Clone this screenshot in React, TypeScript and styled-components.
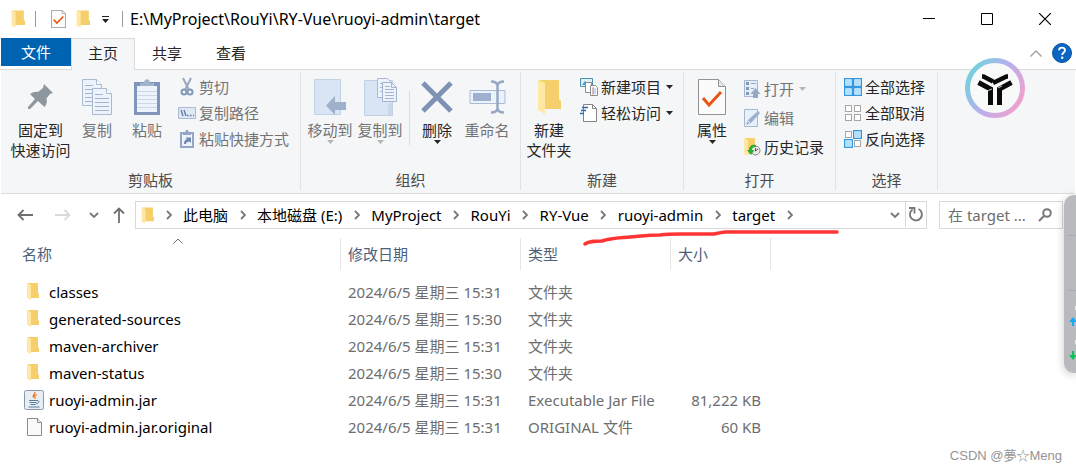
import React from "react";
import styled, { createGlobalStyle } from "styled-components";

const GlobalStyle = createGlobalStyle`
  * { box-sizing: border-box; }
  body {
    margin: 0;
    background: #fff;
    color: #000;
    font: 15px/20px "Noto Sans", "Noto Sans CJK SC", sans-serif;
  }
  button, input { font: inherit; color: inherit; }
  button { background: none; border: 0; padding: 0; margin: 0; cursor: pointer; }
  svg { display: block; flex: none; }
`;

const Window = styled.div`
  position: relative;
  min-height: 100vh;
  overflow: hidden;
`;

/* Title bar */
const TitleBar = styled.header`
  display: flex;
  align-items: center;
  height: 38px;
  padding: 0 2px 0 11px;
`;
const QuickAccess = styled.div`
  display: flex;
  align-items: center;
  gap: 10px;
`;
const Divider = styled.span<{ $after?: number }>`
  width: 1px;
  height: 16px;
  margin-right: ${(p) => p.$after ?? 0}px;
  background: #9a9a9a;
`;
const Title = styled.h1`
  flex: 1;
  margin: 0 0 0 7px;
  font-size: 16px;
  font-weight: 400;
  line-height: 20px;
`;
const WindowButton = styled.button`
  display: flex;
  justify-content: center;
  align-items: center;
  width: 58px;
  height: 38px;
`;

/* Tabs */
const TabBar = styled.nav`
  display: flex;
  align-items: flex-start;
  height: 32px;
  padding: 0 4px 0 1px;
  box-shadow: inset 0 -1px #dadbdc;
`;
const FileTab = styled.button`
  width: 70px;
  height: 28px;
  background: #0063b1;
  color: #fff;
`;
const Tab = styled.button<{ $active?: boolean }>`
  width: 64px;
  height: 32px;
  padding-bottom: 4px;
  color: #262626;
  border: 1px solid ${(p) => (p.$active ? "#dadbdc" : "transparent")};
  border-bottom: 0;
  background: ${(p) => (p.$active ? "#f5f6f7" : "none")};
`;
const TabTools = styled.div`
  display: flex;
  align-items: center;
  gap: 10px;
  height: 30px;
  margin-left: auto;
`;

/* Ribbon */
const Ribbon = styled.section`
  display: flex;
  height: 124px;
  margin: 0 1px;
  padding: 2px 0 3px;
  background: #f5f6f7;
  border-bottom: 1px solid #dadbdc;
`;
const Group = styled.div<{ $width: number; $inset: number }>`
  display: flex;
  flex-direction: column;
  justify-content: space-between;
  flex: none;
  width: ${(p) => p.$width}px;
  border-right: 1px solid #e2e3e4;
  & > div { padding: 2px 0 0 ${(p) => p.$inset}px; }
`;
const GroupBody = styled.div`
  display: flex;
  align-items: flex-start;
`;
const GroupLabel = styled.span`
  text-align: center;
  color: #4b4b4b;
`;
const GroupRule = styled.span`
  width: 1px;
  height: 54px;
  margin: 17px 2px 0 4px;
  background: #dcdddf;
`;
const LargeButton = styled.button<{ $wide?: boolean; $muted?: boolean }>`
  display: flex;
  flex-direction: column;
  align-items: center;
  width: ${(p) => (p.$wide ? 63 : 50)}px;
  white-space: nowrap;
  color: ${(p) => (p.$muted ? "#737475" : "#262626")};
`;
const LargeIcon = styled.span`
  display: flex;
  justify-content: center;
  align-items: center;
  height: 46px;
`;
const SmallColumn = styled.div<{ $row: number }>`
  display: flex;
  flex-direction: column;
  padding-left: 6px;
  button { height: ${(p) => p.$row}px; }
`;
const SmallButton = styled.button<{ $muted?: boolean }>`
  display: flex;
  align-items: center;
  gap: 3px;
  white-space: nowrap;
  color: ${(p) => (p.$muted ? "#737475" : "#262626")};
`;
const ArrowSlot = styled.span`
  padding-left: 2px;
`;

/* Navigation row */
const NavRow = styled.div`
  position: relative;
  display: flex;
  align-items: center;
  height: 42px;
  padding: 0 13px 0 6px;
`;
const NavButton = styled.button<{ $width: number }>`
  display: flex;
  justify-content: center;
  align-items: center;
  flex: none;
  width: ${(p) => p.$width}px;
  height: 28px;
`;
const AddressBar = styled.div`
  display: flex;
  align-items: center;
  flex: 1;
  min-width: 0;
  height: 28px;
  margin: 0 12px 0 2px;
  padding-left: 5px;
  border: 1px solid #d9d9d9;
`;
const Crumb = styled.button`
  white-space: nowrap;
`;
const CrumbArrow = styled.span`
  display: flex;
  justify-content: center;
  width: 29px;
`;
const AddressTools = styled.div`
  display: flex;
  margin-left: auto;
`;
const RefreshButton = styled(NavButton)`
  height: 26px;
  border-left: 1px solid #d9d9d9;
`;
const SearchBox = styled.label`
  display: flex;
  align-items: center;
  width: 124px;
  height: 28px;
  padding: 0 10px 0 8px;
  border: 1px solid #d9d9d9;
`;
const SearchInput = styled.input`
  flex: 1;
  min-width: 0;
  padding: 0;
  border: 0;
  outline: 0;
  background: none;
  &::placeholder { color: #6d6d6d; opacity: 1; }
`;
const Underline = styled.svg`
  position: absolute;
  left: 582px;
  top: 34px;
`;

/* File list */
const FileTable = styled.table`
  width: calc(100% - 15px);
  margin: 2px 0 0 15px;
  table-layout: fixed;
  border-collapse: separate;
  border-spacing: 0;
`;
const HeadCell = styled.th<{ $width?: number }>`
  position: relative;
  width: ${(p) => (p.$width ? p.$width + "px" : "auto")};
  height: 32px;
  padding: 0 7px;
  text-align: left;
  font-weight: 400;
  color: #4c607a;
  border-right: ${(p) => (p.$width ? "1px solid #e5e5e5" : "0")};
`;
const SortMark = styled.span`
  position: absolute;
  left: 50%;
  top: 0;
  margin-left: -5px;
`;
const HeadGap = styled.tr`
  height: 8px;
`;
const Cell = styled.td<{ $right?: boolean }>`
  height: 27px;
  padding: 0 10px 0 7px;
  white-space: nowrap;
  text-align: ${(p) => (p.$right ? "right" : "left")};
  color: #6d6d6d;
`;
const NameCell = styled(Cell)`
  padding-left: 9px;
  color: #000;
`;
const FileName = styled.span`
  display: flex;
  align-items: center;
  gap: 5px;
`;

/* Floating items */
const Badge = styled.svg`
  position: absolute;
  top: 58px;
  right: 51px;
`;
const SidePanel = styled.aside`
  position: absolute;
  top: 195px;
  right: 0;
  width: 12px;
  height: 178px;
  border-radius: 10px 0 0 10px;
  background: #b9babe;
  box-shadow: 0 2px 10px rgba(0, 0, 0, 0.22);
`;
const Watermark = styled.span`
  position: absolute;
  top: 446px;
  right: 14px;
  font: 13px/20px "Liberation Sans", "Noto Sans CJK SC", sans-serif;
  color: #949494;
`;

const Folder = ({ w = 14, h = 18 }: { w?: number; h?: number }) => (
  <svg width={w} height={h} viewBox="0 0 24 36" preserveAspectRatio="none">
    <path d="M2 1h20v19l2 2v8H6z" fill="#f5cf6b" />
    <path d="M1 1l7 3v31L1 31z" fill="#ffe8a3" />
  </svg>
);
const Caret = ({ color = "#262626" }: { color?: string }) => (
  <svg width="7" height="4" viewBox="0 0 7 4"><path d="M0 0h7L3.5 4z" fill={color} /></svg>
);
const CheckDoc = ({ w, h }: { w: number; h: number }) => (
  <svg width={w} height={h} viewBox="0 0 28 36" preserveAspectRatio="none">
    <path d="M.5.5h20l7 7v28H.5z" fill="#fbfbfb" stroke="#929292" vectorEffect="non-scaling-stroke" />
    <path d="M20.5.5v7h7" fill="#e6e6e6" stroke="#929292" />
    <path d="M5 19l6 7 12-13" fill="none" stroke="#ea5514" strokeWidth="3" />
  </svg>
);
const Chevron = () => (
  <svg width="6" height="10" viewBox="0 0 6 10"><path d="M1 1l4 4-4 4" fill="none" stroke="#787878" strokeWidth="1.8" /></svg>
);
const ChevronDown = ({ w = 10 }: { w?: number }) => (
  <svg width={w} height="7" viewBox="0 0 10 7"><path d="M1 1l4 4 4-4" fill="none" stroke="#787878" strokeWidth="1.8" /></svg>
);
const PageLines = ({ x, y }: { x: number; y: number }) => (
  <g transform={`translate(${x} ${y})`}>
    <path d="M.5.5h14l5 5v21H.5z" fill="#edf3fb" stroke="#a9bad1" />
    <path d="M14.5.5v5h5" fill="#fff" stroke="#a9bad1" />
    <path d="M3 6.5h8M3 10.5h14M3 14.5h14M3 18.5h14M3 22.5h14" stroke="#a3b5d0" />
  </g>
);
const CopyIcon = () => (
  <svg width="31" height="37" viewBox="0 0 31 37"><PageLines x={0} y={0} /><PageLines x={10} y={9} /></svg>
);
const PinIcon = () => (
  <svg width="28" height="28" viewBox="0 0 28 28">
    <path d="M17 1l9 9-3 1-3.5 4.500c1 3 0 6-2 8.500L11 18 3 26l-2 0 0-2 7-8-5-5c3-2 6-2.500 8-2L16 5z" fill="#8d979d" />
  </svg>
);
const PasteIcon = () => (
  <svg width="28" height="38" viewBox="0 0 28 38">
    <path d="M1 4h26v33H1z" fill="#8195b8" />
    <path d="M4 8h20v26H4z" fill="#edf3fb" />
    <path d="M4 13.5h20M4 17.5h20M4 21.5h20M4 25.5h20M4 29.5h20" stroke="#cbd8ea" />
    <path d="M7 8V5h4c0-5 6-5 6 0h4v3z" fill="#a3b3cc" />
  </svg>
);
const CutIcon = () => (
  <svg width="18" height="20" viewBox="0 0 18 20">
    <path d="M5 1l6 12M13 1L7 13" stroke="#98a8c2" strokeWidth="2" />
    <circle cx="6" cy="15" r="2.5" fill="none" stroke="#8297ba" strokeWidth="2" />
    <circle cx="12" cy="15" r="2.5" fill="none" stroke="#8297ba" strokeWidth="2" />
  </svg>
);
const PathIcon = () => (
  <svg width="18" height="12" viewBox="0 0 18 12">
    <path d="M.5.5h17v11H.5z" fill="#dfe9f6" stroke="#a9bad1" />
    <path d="M3 3l2 6M6 3l2 6M9 8.5h1.500M12 8.5h1.500M15 8.5h1" stroke="#60779f" strokeWidth="1.3" />
  </svg>
);
const ShortcutIcon = () => (
  <svg width="18" height="20" viewBox="0 0 18 20">
    <path d="M3 4h12v14H3z" fill="#eef4fc" stroke="#94a6c4" strokeWidth="2" />
    <path d="M5 6V3h2.500c0-3 3-3 3 0H13v3z" fill="#94a6c4" />
    <path d="M6 15c0-3 1-4 3-5L7.5 8.5H13V14l-1.500-1.500C9 13 8 14 8 15z" fill="#7189b0" />
  </svg>
);
const MoveIcon = () => (
  <svg width="36" height="38" viewBox="0 0 36 38">
    <path d="M2.5 1.5h26v35h-26z" fill="#d9e5f4" stroke="#c0d0e5" />
    <path d="M14 27.5L23 18v6h11v8H23v5z" fill="#9fb0ca" />
  </svg>
);
const CopyToIcon = () => (
  <svg width="36" height="40" viewBox="0 0 36 40">
    <path d="M2.5 3.5h28v35h-28z" fill="#d9e5f4" stroke="#c0d0e5" />
    <path d="M26 38V28c1-3 4-3 4 0v10z" fill="#cad8ea" />
    <path d="M15.5 1.5h10l4 4v15h-14z" fill="#edf3fb" stroke="#a9bad1" />
    <path d="M18 6.5h6M18 10.5h4M18 14.5h4" stroke="#a3b5d0" />
    <path d="M20.5 5.5h9l5 5v14h-14z" fill="#edf3fb" stroke="#a0b3cf" />
    <path d="M29.5 5.5v5h5M23 9.5h5M23 12.5h9M23 15.5h9M23 18.5h9M23 21.5h9" fill="none" stroke="#a3b5d0" />
  </svg>
);
const DeleteIcon = () => (
  <svg width="32" height="32" viewBox="0 0 32 32"><path d="M2 2l28 28M30 2L2 30" stroke="#8092b3" strokeWidth="5" /></svg>
);
const RenameIcon = () => (
  <svg width="37" height="34" viewBox="0 0 37 34">
    <path d="M1 10.5h35v13H1z" fill="#eaf2fb" stroke="#a9bbd6" />
    <path d="M4 13h18v8H4z" fill="#9eb0cd" />
    <path d="M22 1.5c4 0 6 1 6.5 4 .5-3 2.5-4 6.5-4M28.5 4v26M22 32.5c4 0 6-1 6.5-4 .5 3 2.5 4 6.5 4" fill="none" stroke="#96a8c5" strokeWidth="2.5" />
  </svg>
);
const NewItemIcon = () => (
  <svg width="18" height="18" viewBox="0 0 18 18">
    <path d="M.5.5h12v8H.5z" fill="#dff0f7" stroke="#4d91ac" />
    <path d="M2 7l3-4 3 3 2-2 2 3z" fill="#4a9bc0" />
    <path d="M5.5 4.5h6v10h-6z" fill="#fff" stroke="#8c8c8c" />
    <path d="M10.5 7.5h5l2 2v8h-7z" fill="#fff" stroke="#8c8c8c" />
    <path d="M12 11h4M12 13h4M12 15h4" stroke="#8bb2d5" /><path d="M13 9v8" stroke="#e39898" />
  </svg>
);
const EasyIcon = () => (
  <svg width="18" height="18" viewBox="0 0 18 18">
    <path d="M3.5.5h9l4 4v13h-13z" fill="#fff" stroke="#858585" />
    <path d="M12.5.5v4h4" fill="none" stroke="#858585" />
    <path d="M2 3.5h6M1 6.5h5M0 9.5h4" stroke="#2c6ba3" strokeWidth="1.5" />
  </svg>
);
const OpenIcon = () => (
  <svg width="18" height="18" viewBox="0 0 18 18">
    <path d="M1.5.5h13v16h-13z" fill="#e5edf8" stroke="#a5b5cd" />
    <path d="M3 2h3v3H3zM3 7h3v3H3zM3 12h3v3H3z" fill="#8297b9" />
    <path d="M8 3.5h5M8 8.5h3M8 13.5h2" stroke="#94a8c7" />
    <path d="M12.5 8l5 6H15v4h-5v-4H7.500z" fill="#96a7c3" />
  </svg>
);
const EditIcon = () => (
  <svg width="18" height="18" viewBox="0 0 18 18">
    <path d="M1.5.5h13v17h-13z" fill="#e8f0fa" stroke="#a5b7d1" />
    <path d="M3 16l2-5 10-9 2 2L8 14z" fill="#9bb0cf" />
    <path d="M5 12l2 2" stroke="#fff" />
  </svg>
);
const HistoryIcon = () => (
  <svg width="18" height="20" viewBox="0 0 18 20">
    <path d="M2 1h10v16H4z" fill="#f5cf6b" /><path d="M1 1l4 2v16l-4-2z" fill="#ffe8a3" />
    <circle cx="12.5" cy="13.5" r="4.5" fill="#e9e9e9" stroke="#888" />
    <path d="M12.5 14v-3M12.500 14l2.500-2" fill="none" stroke="#555" />
    <path d="M13 8c-4-1-7 1-7 5H4l4 5 3.500-5H9c0-2 1-3 4-3z" fill="#2fae33" />
  </svg>
);
const SelectIcon = ({ on }: { on: number[] }) => (
  <svg width="18" height="18" viewBox="0 0 18 18">
    {[0, 1, 2, 3].map((i) => {
      const x = (i % 2) * 9;
      const y = Math.floor(i / 2) * 9;
      return on.includes(i) ? (
        <g key={i}>
          <rect x={x} y={y} width="9" height="9" fill="#3298e2" />
          <rect x={x + 1.3} y={y + 1.3} width="6.4" height="6.4" fill="#eaf7ff" />
          <rect x={x + 2} y={y + 2} width="5" height="5" fill="#b5e0fb" />
        </g>
      ) : (
        <rect key={i} x={x + 1.5} y={y + 1.5} width="6" height="6" fill="#fff" stroke="#a6a6a6" />
      );
    })}
  </svg>
);
const JarIcon = () => (
  <svg width="20" height="20" viewBox="0 0 20 20">
    <rect x=".5" y=".5" width="19" height="19" rx="2" fill="#e8eef3" stroke="#8798a8" />
    <path d="M10.5 2c2 2-3 3-1 5.500M13 4.500c-3 1-3 2-1.500 4" fill="none" stroke="#e8762c" strokeWidth="1.3" />
    <path d="M5 10.500h8M5.500 12.500h7M6.500 14.500h5M4.500 17h11" stroke="#587c9c" strokeWidth="1.2" />
    <path d="M13 10.500c3 0 2 3-1 3.500" fill="none" stroke="#587c9c" />
  </svg>
);
const BlankDoc = () => (
  <svg width="20" height="18" viewBox="0 0 20 18">
    <path d="M3.5.5h10l4 4v13h-14z" fill="#fafafa" stroke="#8c8c8c" />
    <path d="M13.5.5v4h4" fill="#eee" stroke="#8c8c8c" />
  </svg>
);
const FolderSlot = () => (
  <svg width="20" height="20" viewBox="0 0 20 20">
    <path d="M3 1h11v10l1 1v4H5z" fill="#f5cf6b" /><path d="M3 1l4 2v15l-4-2z" fill="#ffe8a3" />
  </svg>
);

const crumbs = ["此电脑", "本地磁盘 (E:)", "MyProject", "RouYi", "RY-Vue", "ruoyi-admin", "target"];

const files = [
  { icon: <FolderSlot />, name: "classes", date: "2024/6/5 星期三 15:31", type: "文件夹", size: "" },
  { icon: <FolderSlot />, name: "generated-sources", date: "2024/6/5 星期三 15:30", type: "文件夹", size: "" },
  { icon: <FolderSlot />, name: "maven-archiver", date: "2024/6/5 星期三 15:31", type: "文件夹", size: "" },
  { icon: <FolderSlot />, name: "maven-status", date: "2024/6/5 星期三 15:30", type: "文件夹", size: "" },
  { icon: <JarIcon />, name: "ruoyi-admin.jar", date: "2024/6/5 星期三 15:31", type: "Executable Jar File", size: "81,222 KB" },
  { icon: <BlankDoc />, name: "ruoyi-admin.jar.original", date: "2024/6/5 星期三 15:31", type: "ORIGINAL 文件", size: "60 KB" },
];

type LargeProps = { icon: React.ReactNode; lines: string[]; muted?: boolean; wide?: boolean; arrow?: boolean };
const Large = ({ icon, lines, muted, wide, arrow }: LargeProps) => (
  <LargeButton $muted={muted} $wide={wide}>
    <LargeIcon>{icon}</LargeIcon>
    {lines.map((line) => <span key={line}>{line}</span>)}
    {arrow && <Caret color={muted ? "#b5b6b8" : "#262626"} />}
  </LargeButton>
);
type SmallProps = { icon: React.ReactNode; text: string; muted?: boolean; arrow?: boolean };
const Small = ({ icon, text, muted, arrow }: SmallProps) => (
  <SmallButton $muted={muted}>
    {icon}
    <span>{text}</span>
    {arrow && <ArrowSlot><Caret color={muted ? "#b5b6b8" : "#262626"} /></ArrowSlot>}
  </SmallButton>
);

export default function App() {
  return (
    <Window>
      <GlobalStyle />
      <TitleBar>
        <QuickAccess>
          <Folder />
          <Divider $after={5} />
          <CheckDoc w={15} h={18} />
          <Folder />
          <button aria-label="customize">
            <svg width="12" height="9" viewBox="0 0 12 9"><path d="M2 1.5h7" stroke="#222" /><path d="M2 4h7L5.500 8z" fill="#222" /></svg>
          </button>
          <Divider />
        </QuickAccess>
        <Title>E:\MyProject\RouYi\RY-Vue\ruoyi-admin\target</Title>
        <WindowButton aria-label="minimize">
          <svg width="12" height="12" viewBox="0 0 12 12"><path d="M0 5.5h12" stroke="#000" /></svg>
        </WindowButton>
        <WindowButton aria-label="maximize">
          <svg width="12" height="12" viewBox="0 0 12 12"><path d="M.5.5h11v11H.5z" fill="none" stroke="#000" /></svg>
        </WindowButton>
        <WindowButton aria-label="close">
          <svg width="12" height="12" viewBox="0 0 12 12"><path d="M0 0l12 12M12 0L0 12" stroke="#000" strokeWidth="1.2" /></svg>
        </WindowButton>
      </TitleBar>

      <TabBar>
        <FileTab>文件</FileTab>
        <Tab $active>主页</Tab>
        <Tab>共享</Tab>
        <Tab>查看</Tab>
        <TabTools>
          <button aria-label="collapse">
            <svg width="12" height="7" viewBox="0 0 12 7"><path d="M.5 6.5L6 1l5.500 5.500" fill="none" stroke="#a0a0a0" strokeWidth="1.3" /></svg>
          </button>
          <button aria-label="help">
            <svg width="20" height="20" viewBox="0 0 20 20">
              <circle cx="10" cy="10" r="9.5" fill="#0b66c3" stroke="#07529f" />
              <path d="M7 7.200c.2-3.400 6-3.400 6 0 0 2.200-2.800 2.300-2.800 4.800" fill="none" stroke="#fff" strokeWidth="1.9" />
              <circle cx="10.2" cy="14.8" r="1.2" fill="#fff" />
            </svg>
          </button>
        </TabTools>
      </TabBar>

      <Ribbon>
        <Group $width={300} $inset={8}>
          <GroupBody>
            <Large wide icon={<PinIcon />} lines={["固定到", "快速访问"]} />
            <Large muted icon={<CopyIcon />} lines={["复制"]} />
            <Large muted icon={<PasteIcon />} lines={["粘贴"]} />
            <SmallColumn $row={26}>
              <Small muted icon={<CutIcon />} text="剪切" />
              <Small muted icon={<PathIcon />} text="复制路径" />
              <Small muted icon={<ShortcutIcon />} text="粘贴快捷方式" />
            </SmallColumn>
          </GroupBody>
          <GroupLabel>剪贴板</GroupLabel>
        </Group>
        <Group $width={220} $inset={4}>
          <GroupBody>
            <Large muted arrow icon={<MoveIcon />} lines={["移动到"]} />
            <Large muted arrow icon={<CopyToIcon />} lines={["复制到"]} />
            <GroupRule />
            <Large arrow icon={<DeleteIcon />} lines={["删除"]} />
            <Large muted icon={<RenameIcon />} lines={["重命名"]} />
          </GroupBody>
          <GroupLabel>组织</GroupLabel>
        </Group>
        <Group $width={163} $inset={3}>
          <GroupBody>
            <Large icon={<Folder w={24} h={36} />} lines={["新建", "文件夹"]} />
            <SmallColumn $row={26}>
              <Small arrow icon={<NewItemIcon />} text="新建项目" />
              <Small arrow icon={<EasyIcon />} text="轻松访问" />
            </SmallColumn>
          </GroupBody>
          <GroupLabel>新建</GroupLabel>
        </Group>
        <Group $width={152} $inset={3}>
          <GroupBody>
            <Large arrow icon={<CheckDoc w={28} h={36} />} lines={["属性"]} />
            <SmallColumn $row={29}>
              <Small muted arrow icon={<OpenIcon />} text="打开" />
              <Small muted icon={<EditIcon />} text="编辑" />
              <Small icon={<HistoryIcon />} text="历史记录" />
            </SmallColumn>
          </GroupBody>
          <GroupLabel>打开</GroupLabel>
        </Group>
        <Group $width={102} $inset={2}>
          <GroupBody>
            <SmallColumn $row={26}>
              <Small icon={<SelectIcon on={[0, 1, 2, 3]} />} text="全部选择" />
              <Small icon={<SelectIcon on={[]} />} text="全部取消" />
              <Small icon={<SelectIcon on={[1, 2]} />} text="反向选择" />
            </SmallColumn>
          </GroupBody>
          <GroupLabel>选择</GroupLabel>
        </Group>
      </Ribbon>

      <NavRow>
        <NavButton $width={38} aria-label="back">
          <svg width="16" height="12" viewBox="0 0 16 12"><path d="M6.5 1l-5 5 5 5M1.500 6H16" fill="none" stroke="#6f6f6f" strokeWidth="1.8" /></svg>
        </NavButton>
        <NavButton $width={38} aria-label="forward">
          <svg width="16" height="12" viewBox="0 0 16 12"><path d="M9.5 1l5 5-5 5M14.500 6H0" fill="none" stroke="#dadada" strokeWidth="1.8" /></svg>
        </NavButton>
        <NavButton $width={23} aria-label="recent"><ChevronDown /></NavButton>
        <NavButton $width={28} aria-label="up">
          <svg width="12" height="16" viewBox="0 0 12 16"><path d="M1 6.5l5-5 5 5M6 1.500V16" fill="none" stroke="#6f6f6f" strokeWidth="1.8" /></svg>
        </NavButton>
        <AddressBar>
          <Folder w={13} h={17} />
          {crumbs.map((c) => (
            <React.Fragment key={c}>
              <CrumbArrow><Chevron /></CrumbArrow>
              <Crumb>{c}</Crumb>
            </React.Fragment>
          ))}
          <CrumbArrow><Chevron /></CrumbArrow>
          <AddressTools>
            <NavButton $width={20} aria-label="history"><ChevronDown w={12} /></NavButton>
            <RefreshButton $width={21} aria-label="refresh">
              <svg width="16" height="16" viewBox="0 0 16 16">
                <path d="M10.5 3a6 6 0 1 1-6 .5" fill="none" stroke="#787878" strokeWidth="1.9" />
                <path d="M1 2h5.500V7.500" fill="none" stroke="#787878" strokeWidth="1.8" />
              </svg>
            </RefreshButton>
          </AddressTools>
        </AddressBar>
        <SearchBox>
          <SearchInput aria-label="search" placeholder="在 target ..." />
          <svg width="14" height="14" viewBox="0 0 14 14">
            <circle cx="9" cy="5" r="3.8" fill="none" stroke="#787878" strokeWidth="2" />
            <path d="M6.2 7.800L1 13" stroke="#787878" strokeWidth="2" />
          </svg>
        </SearchBox>
        <Underline width="260" height="20" viewBox="0 0 260 20">
          <path d="M3 16c4-3 9-3 17-3 8-3 16-3 28-4 12-1 20-2 30-2 8-1 14-1 20-1h34c6-1 8-2 12-2h111" fill="none" stroke="#ff3535" strokeWidth="3.5" strokeLinecap="round" />
        </Underline>
      </NavRow>

      <FileTable>
        <thead>
          <tr>
            <HeadCell $width={326}>
              <SortMark><svg width="10" height="6" viewBox="0 0 10 6"><path d="M.5 5.5L5 1l4.500 4.500" fill="none" stroke="#777" /></svg></SortMark>
              名称
            </HeadCell>
            <HeadCell $width={180}>修改日期</HeadCell>
            <HeadCell $width={150}>类型</HeadCell>
            <HeadCell $width={100}>大小</HeadCell>
            <HeadCell />
          </tr>
        </thead>
        <tbody>
          <HeadGap />
          {files.map((f) => (
            <tr key={f.name}>
              <NameCell><FileName>{f.icon}{f.name}</FileName></NameCell>
              <Cell>{f.date}</Cell>
              <Cell>{f.type}</Cell>
              <Cell $right>{f.size}</Cell>
              <Cell />
            </tr>
          ))}
        </tbody>
      </FileTable>

      <Badge width="60" height="60" viewBox="0 0 60 60">
        <defs>
          <linearGradient id="ring" x1="0" y1="0.2" x2="1" y2="0.8">
            <stop offset="0" stopColor="#6fd3dc" />
            <stop offset="0.5" stopColor="#b9afee" />
            <stop offset="1" stopColor="#f3a0cb" />
          </linearGradient>
        </defs>
        <circle cx="30" cy="30" r="27.5" fill="#f8fafa" stroke="url(#ring)" strokeWidth="5" />
        <g fill="none" stroke="#0a0a0a" strokeWidth="5">
          <path d="M13.5 24.500L25.500 31v16" />
          <path d="M46.500 24.500L34.500 31v16" />
          <path d="M17 18.500h1.500L28 23.500M43 18.500h-1.500L28 25" strokeWidth="4.5" />
        </g>
        <path d="M22 33l5-2M33 30l4-2" stroke="#f8fafa" strokeWidth="0.8" />
      </Badge>
      <SidePanel>
        <svg width="12" height="178" viewBox="0 0 12 178">
          <path d="M4 40.5h8M4 95.5h8" stroke="#a5acb0" />
          <path d="M9 122l4 5h-3v4H8v-4H5z" fill="#16a9fa" />
          <path d="M9 165l4-5h-3v-4H8v4H5z" fill="#0bc15c" />
          <path d="M11 111h1v4h-1zM11 145h1v4h-1z" fill="#eee" />
        </svg>
      </SidePanel>
      <Watermark>CSDN @夢☆Meng</Watermark>
    </Window>
  );
}
